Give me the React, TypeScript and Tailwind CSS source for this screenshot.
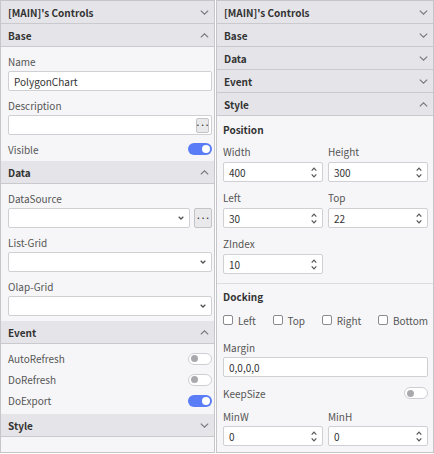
import type { ReactNode } from 'react'

function Chevron({ up }: { up?: boolean }) {
  return (
    <svg width="9" height="5" viewBox="0 0 9 5" className="shrink-0">
      <path d={up ? 'M0.8 4.4 L4.5 0.8 L8.2 4.4' : 'M0.8 0.6 L4.5 4.2 L8.2 0.6'} fill="none" stroke="#7a7a80" strokeWidth="1.2" />
    </svg>
  )
}

function SmallDown() {
  return (
    <svg width="6" height="4" viewBox="0 0 6 4" className="shrink-0">
      <path d="M0.7 0.7 L3 3 L5.3 0.7" fill="none" stroke="#555" strokeWidth="1.3" />
    </svg>
  )
}

function Spin() {
  return (
    <svg width="6" height="11" viewBox="0 0 6 11" className="shrink-0">
      <path d="M0.7 3.6 L3 1.2 L5.3 3.6" fill="none" stroke="#555" strokeWidth="1.2" />
      <path d="M0.7 7.4 L3 9.8 L5.3 7.4" fill="none" stroke="#555" strokeWidth="1.2" />
    </svg>
  )
}

function Header({ title, open }: { title: string; open?: boolean }) {
  return (
    <div className="flex h-[23px] shrink-0 items-center justify-between border-b border-[#c9c9ce] bg-[#e5e5e9] pl-[7px] pr-[5px] text-[10px] font-bold text-[#333]">
      <span>{title}</span>
      <Chevron up={open} />
    </div>
  )
}

function Label({ children }: { children: ReactNode }) {
  return <div className="flex h-[20px] items-center text-[10px] text-[#555]">{children}</div>
}

// grow: only inside a flex row (DataSource + button)
function Box({ value, children, grow }: { value?: string; children?: ReactNode; grow?: boolean }) {
  return (
    <div
      className={`flex h-[20px] shrink-0 items-center justify-between rounded-[2px] border border-[#d0d0d4] bg-white pl-[5px] pr-[2px] text-[10px] text-[#333] ${
        grow ? 'min-w-0 flex-1' : 'w-full'
      }`}
    >
      <span>{value}</span>
      {children}
    </div>
  )
}

function Dots({ inside }: { inside?: boolean }) {
  return (
    <div
      className={
        inside
          ? 'flex h-[15px] w-[13px] items-center justify-center rounded-[2px] border border-[#c4c4c8] bg-[#e9e9ec] text-[8px] font-bold leading-none text-[#333]'
          : 'flex h-[20px] w-[18px] shrink-0 items-center justify-center rounded-[2px] border border-[#c4c4c8] bg-[#e9e9ec] text-[8px] font-bold leading-none text-[#333]'
      }
    >
      ···
    </div>
  )
}

function Toggle({ on }: { on?: boolean }) {
  return on ? (
    <div className="flex h-[12px] w-[24px] items-center justify-end rounded-full bg-[#5b7cf7] pr-[2px]">
      <div className="h-[8px] w-[8px] rounded-full bg-white" />
    </div>
  ) : (
    <div className="flex h-[12px] w-[24px] items-center rounded-full border border-[#cfcfd3] bg-white pl-[2px]">
      <div className="h-[7px] w-[7px] rounded-full bg-[#a9a9ad]" />
    </div>
  )
}

function SwitchRow({ label, on, h = 'h-[21px]' }: { label: string; on?: boolean; h?: string }) {
  return (
    <div className={`flex ${h} items-center justify-between text-[10px] text-[#555]`}>
      <span>{label}</span>
      <Toggle on={on} />
    </div>
  )
}

function NumField({ label, value }: { label: string; value: string }) {
  return (
    <div className="flex flex-col">
      <div className="flex h-[21px] items-center text-[10px] text-[#555]">{label}</div>
      <Box value={value}>
        <span className="pr-[3px]">
          <Spin />
        </span>
      </Box>
    </div>
  )
}

function Check({ label }: { label: string }) {
  return (
    <div className="flex items-center gap-[5px] text-[10px] text-[#555]">
      <div className="h-[10px] w-[10px] rounded-[2px] border border-[#8a8a8e] bg-white" />
      <span>{label}</span>
    </div>
  )
}

function LeftPanel() {
  return (
    <div className="flex h-[453px] w-[215px] shrink-0 flex-col border border-[#c6c6ca] bg-[#f6f6f8]">
      <Header title="[MAIN]'s Controls" />
      <Header title="Base" open />
      <div className="flex flex-col gap-[4px] pb-[2px] pl-[7px] pr-[2px] pt-[4px]">
        <div>
          <Label>Name</Label>
          <Box value="PolygonChart" />
        </div>
        <div>
          <Label>Description</Label>
          <Box>
            <Dots inside />
          </Box>
        </div>
        <SwitchRow label="Visible" on h="h-[20px]" />
      </div>
      <Header title="Data" open />
      <div className="flex flex-col gap-[4px] pb-[5px] pl-[7px] pr-[2px] pt-[4px]">
        <div>
          <Label>DataSource</Label>
          <div className="flex gap-[4px]">
            <Box grow>
              <span className="pr-[3px]">
                <SmallDown />
              </span>
            </Box>
            <Dots />
          </div>
        </div>
        <div>
          <Label>List-Grid</Label>
          <Box>
            <span className="pr-[3px]">
              <SmallDown />
            </span>
          </Box>
        </div>
        <div>
          <Label>Olap-Grid</Label>
          <Box>
            <span className="pr-[3px]">
              <SmallDown />
            </span>
          </Box>
        </div>
      </div>
      <Header title="Event" open />
      <div className="flex flex-col pb-[3px] pl-[7px] pr-[2px] pt-[4px]">
        <SwitchRow label="AutoRefresh" />
        <SwitchRow label="DoRefresh" />
        <SwitchRow label="DoExport" on />
      </div>
      <Header title="Style" />
      <div className="flex-1" />
    </div>
  )
}

function RightPanel() {
  return (
    <div className="flex h-[453px] flex-1 flex-col border border-[#c6c6ca] bg-[#f6f6f8]">
      <Header title="[MAIN]'s Controls" />
      <Header title="Base" />
      <Header title="Data" />
      <Header title="Event" />
      <Header title="Style" open />
      <div className="flex flex-col pb-[9px] pl-[6px] pr-[5px] pt-[3px]">
        <div className="flex h-[20px] items-center text-[10px] font-bold text-[#333]">Position</div>
        <div className="mt-[2px] grid grid-cols-2 gap-x-[5px] gap-y-[5px]">
          <NumField label="Width" value="400" />
          <NumField label="Height" value="300" />
          <NumField label="Left" value="30" />
          <NumField label="Top" value="22" />
          <NumField label="ZIndex" value="10" />
        </div>
      </div>
      <div className="flex flex-1 flex-col border-t border-[#dcdce0] pl-[6px] pr-[5px] pt-[2px]">
        <div className="flex h-[20px] items-center text-[10px] font-bold text-[#333]">Docking</div>
        <div className="mt-[4px] flex h-[20px] items-center justify-between">
          <Check label="Left" />
          <Check label="Top" />
          <Check label="Right" />
          <Check label="Bottom" />
        </div>
        <div className="mt-[7px]">
          <Label>Margin</Label>
          <Box value="0,0,0,0" />
        </div>
        <div className="mt-[6px]">
          <SwitchRow label="KeepSize" h="h-[20px]" />
        </div>
        <div className="mt-[3px] grid grid-cols-2 gap-x-[5px]">
          <div className="flex flex-col">
            <Label>MinW</Label>
            <Box value="0">
              <span className="pr-[3px]">
                <Spin />
              </span>
            </Box>
          </div>
          <div className="flex flex-col">
            <Label>MinH</Label>
            <Box value="0">
              <span className="pr-[3px]">
                <Spin />
              </span>
            </Box>
          </div>
        </div>
      </div>
    </div>
  )
}

export default function App() {
  return (
    <div className="flex h-[454px] w-[434px] gap-[1px] bg-white font-['Noto_Sans_CJK_KR','Noto_Sans',sans-serif]">
      <LeftPanel />
      <RightPanel />
    </div>
  )
}
